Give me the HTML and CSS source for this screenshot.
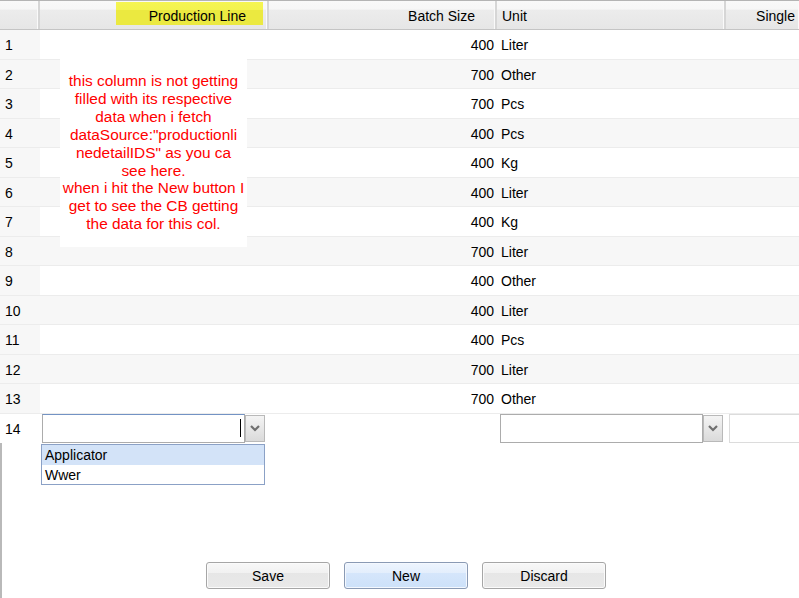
FILE: index.html
```html
<!DOCTYPE html>
<html lang="en">
<head>
    <meta charset="UTF-8">
    <title>Production Line Detail</title>
    <link rel="stylesheet" href="styles.css">
</head>
<body>

    <div class="grid">
        <div class="grid-header">
            <div class="hcell"></div>
            <div class="hcell right marked-col"><span class="marked">Production Line</span></div>
            <div class="hcell right">Batch Size</div>
            <div class="hcell">Unit</div>
            <div class="hcell right last">Single</div>
        </div>

        <div class="grid-body">
            <div class="row"><div class="cell num">1</div><div class="cell"></div><div class="cell right">400</div><div class="cell">Liter</div><div class="cell"></div></div>
            <div class="row"><div class="cell num">2</div><div class="cell"></div><div class="cell right">700</div><div class="cell">Other</div><div class="cell"></div></div>
            <div class="row"><div class="cell num">3</div><div class="cell"></div><div class="cell right">700</div><div class="cell">Pcs</div><div class="cell"></div></div>
            <div class="row"><div class="cell num">4</div><div class="cell"></div><div class="cell right">400</div><div class="cell">Pcs</div><div class="cell"></div></div>
            <div class="row"><div class="cell num">5</div><div class="cell"></div><div class="cell right">400</div><div class="cell">Kg</div><div class="cell"></div></div>
            <div class="row"><div class="cell num">6</div><div class="cell"></div><div class="cell right">400</div><div class="cell">Liter</div><div class="cell"></div></div>
            <div class="row"><div class="cell num">7</div><div class="cell"></div><div class="cell right">400</div><div class="cell">Kg</div><div class="cell"></div></div>
            <div class="row"><div class="cell num">8</div><div class="cell"></div><div class="cell right">700</div><div class="cell">Liter</div><div class="cell"></div></div>
            <div class="row"><div class="cell num">9</div><div class="cell"></div><div class="cell right">400</div><div class="cell">Other</div><div class="cell"></div></div>
            <div class="row"><div class="cell num">10</div><div class="cell"></div><div class="cell right">400</div><div class="cell">Liter</div><div class="cell"></div></div>
            <div class="row"><div class="cell num">11</div><div class="cell"></div><div class="cell right">400</div><div class="cell">Pcs</div><div class="cell"></div></div>
            <div class="row"><div class="cell num">12</div><div class="cell"></div><div class="cell right">700</div><div class="cell">Liter</div><div class="cell"></div></div>
            <div class="row"><div class="cell num">13</div><div class="cell"></div><div class="cell right">700</div><div class="cell">Other</div><div class="cell"></div></div>

            <div class="row edit-row">
                <div class="cell num">14</div>
                <div class="cell edit">
                    <div class="combo">
                        <div class="combo-input focused"><span class="caret"></span></div>
                        <div class="combo-btn">
                            <svg width="12" height="8" viewBox="0 0 12 8"><polyline points="2,2 6,6 10,2" fill="none" stroke="#6f6f6f" stroke-width="2.2"/></svg>
                        </div>
                        <ul class="picklist">
                            <li class="picked">Applicator</li>
                            <li>Wwer</li>
                        </ul>
                    </div>
                </div>
                <div class="cell"></div>
                <div class="cell edit">
                    <div class="combo">
                        <div class="combo-input"></div>
                        <div class="combo-btn">
                            <svg width="12" height="8" viewBox="0 0 12 8"><polyline points="2,2 6,6 10,2" fill="none" stroke="#6f6f6f" stroke-width="2.2"/></svg>
                        </div>
                    </div>
                </div>
                <div class="cell edit"><div class="text-input"></div></div>
            </div>

            <div class="empty-area">
                <div class="buttons">
                    <button type="button" class="btn">Save</button>
                    <button type="button" class="btn btn-new">New</button>
                    <button type="button" class="btn">Discard</button>
                </div>
            </div>
        </div>

        <div class="note">
            this column is not getting filled with its respective data when i fetch dataSource:"productionli nedetailIDS" as you ca see here.<br>
            when i hit the New button I get to see the CB getting the data for this col.
        </div>
    </div>

</body>
</html>
```

FILE: styles.css
```css
body {
    margin: 0;
    padding: 0;
    font-family: "Liberation Sans", Arial, sans-serif;
    font-size: 14px;
    color: #000;
    background-color: white;
    overflow: hidden;
}

.grid {
    position: relative;
    width: 799px;
    height: 598px;
    display: flex;
    flex-direction: column;
}

/* header */
.grid-header {
    display: grid;
    grid-template-columns: 40px 229px 228px 229px 1fr;
    height: 28px;
    border-top: 1px solid #b4b4b4;
    border-bottom: 1px solid #c4c4c4;
    background: linear-gradient(#f9f9f9 0%, #f6f6f6 30%, #ececec 31%, #e6e6e6 100%);
}

.hcell {
    display: flex;
    align-items: center;
    padding-left: 5px;
    padding-top: 2px;
    border-right: 2px solid #d6d6d6;
    box-shadow: inset -1px 0 0 #fafafa;
    white-space: nowrap;
    overflow: hidden;
}

.hcell.right {
    justify-content: flex-end;
    padding-right: 20px;
}

.hcell.last {
    border-right: none;
    padding-right: 4px;
}

.hcell.marked-col {
    padding-right: 4px;
    padding-top: 0;
    align-items: flex-start;
}

.marked {
    display: block;
    height: 23px;
    line-height: 28px;
    margin-top: 1px;
    padding: 0 17px 0 33px;
    background: linear-gradient(#f5f552 0%, #f3f34f 35%, #ebe940 36%, #ebe940 100%);
}

/* rows */
.row {
    display: grid;
    grid-template-columns: 40px 229px 228px 229px 1fr;
    height: 28.5px;
    border-bottom: 1px solid #ececec;
    background-color: white;
}

.row:nth-child(even) {
    background-color: #f7f7f7;
}

.cell {
    display: flex;
    align-items: center;
    padding-left: 4px;
    padding-top: 2px;
    white-space: nowrap;
}

.cell.num {
    padding-left: 5px;
    background-color: #f7f7f7;
}

.cell.right {
    justify-content: flex-end;
    padding-right: 3px;
}

/* edit row */
.row.edit-row {
    height: 29px;
    border-bottom: none;
    background-color: white;
}

.edit-row .cell {
    padding-top: 0;
}

.edit-row .cell.num {
    padding-top: 2px;
    background-color: white;
}

.cell.edit {
    padding-left: 2px;
}

.edit-row .cell.edit:nth-child(4) {
    padding-left: 3px;
}

.combo {
    position: relative;
    display: flex;
    height: 29px;
}

.combo-input {
    width: 198px;
    height: 27px;
    border: 1px solid #acacac;
    background: white;
    display: flex;
    align-items: center;
    justify-content: flex-end;
    padding-right: 3px;
}

.combo-input.focused {
    border-top-color: #7393c4;
}

.caret {
    width: 1px;
    height: 18px;
    background-color: #000;
}

.combo-btn {
    width: 18px;
    height: 25px;
    margin-top: 1px;
    border: 1px solid #b9b9b9;
    background: linear-gradient(#f4f4f4, #dadada);
    display: flex;
    align-items: center;
    justify-content: center;
}

.picklist {
    position: absolute;
    top: 30px;
    left: -1px;
    width: 222px;
    margin: 0;
    padding: 0;
    list-style: none;
    border: 1px solid #8ba1c6;
    background: white;
    z-index: 2;
}

.picklist li {
    height: 19px;
    line-height: 20px;
    padding-left: 3px;
}

.picklist li.picked {
    background-color: #d3e3f8;
    height: 20px;
}

.text-input {
    width: 100%;
    height: 27px;
    margin-left: 1px;
    border: 1px solid #dcdcdc;
    border-right: none;
}

/* empty grid area + buttons */
.grid-body {
    flex: 1;
    display: flex;
    flex-direction: column;
}

.empty-area {
    flex: 1;
    border-left: 2px solid #b9b9b9;
    display: flex;
    align-items: flex-end;
    padding-bottom: 9px;
}

.buttons {
    display: flex;
    gap: 14px;
    padding-left: 204px;
}

.btn {
    width: 124px;
    height: 27px;
    font-family: "Liberation Sans", Arial, sans-serif;
    font-size: 14px;
    color: #000;
    border: 1px solid #a6a6a6;
    border-radius: 3px;
    background: linear-gradient(#f8f8f8 0%, #f1f1f1 40%, #e6e6e6 41%, #e9e9e9 100%);
    box-shadow: inset 0 0 0 1px #fbfbfb;
    cursor: pointer;
    padding: 0;
}

.btn-new {
    border-color: #8a9ab4;
    background: linear-gradient(#eef5fe 0%, #e3eefc 40%, #d5e6fb 41%, #cde1f9 100%);
    box-shadow: inset 0 0 0 1px #f4f8fe;
}

/* annotation over the grid */
.note {
    position: absolute;
    left: 60px;
    top: 57px;
    width: 187px;
    box-sizing: border-box;
    height: 190px;
    padding: 15px 2px 0;
    background: white;
    color: #ff0000;
    text-align: center;
    font-size: 15.4px;
    line-height: 17.9px;
}
```
